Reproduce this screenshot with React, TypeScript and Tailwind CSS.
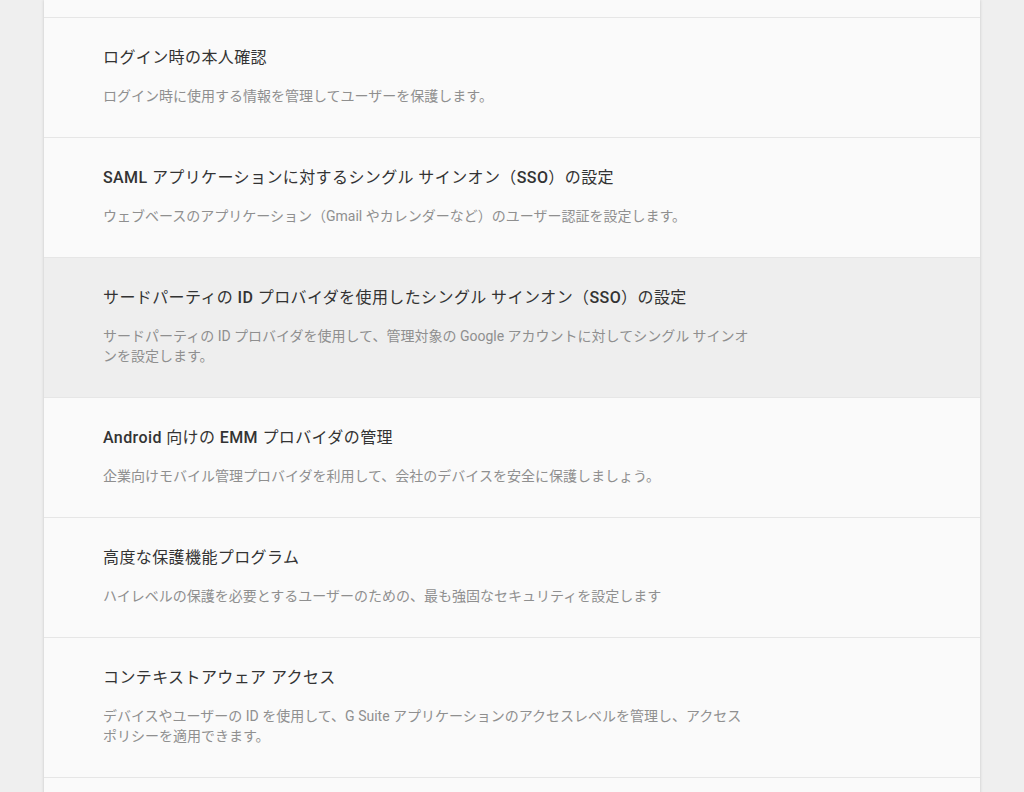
const font = { fontFamily: 'Roboto, "Noto Sans CJK JP", sans-serif' };

type Item = { title: React.ReactNode; desc: string; active?: boolean };

function L({ children }: { children: React.ReactNode }) {
  return <span className="font-medium">{children}</span>;
}

const items: Item[] = [
  {
    title: 'ログイン時の本人確認',
    desc: 'ログイン時に使用する情報を管理してユーザーを保護します。',
  },
  {
    title: (
      <>
        <L>SAML</L> アプリケーションに対するシングル サインオン（<L>SSO</L>）の設定
      </>
    ),
    desc: 'ウェブベースのアプリケーション（Gmail やカレンダーなど）のユーザー認証を設定します。',
  },
  {
    title: (
      <>
        サードパーティの <L>ID</L> プロバイダを使用したシングル サインオン（<L>SSO</L>）の設定
      </>
    ),
    desc: 'サードパーティの ID プロバイダを使用して、管理対象の Google アカウントに対してシングル サインオンを設定します。',
    active: true,
  },
  {
    title: (
      <>
        <L>Android</L> 向けの <L>EMM</L> プロバイダの管理
      </>
    ),
    desc: '企業向けモバイル管理プロバイダを利用して、会社のデバイスを安全に保護しましょう。',
  },
  {
    title: '高度な保護機能プログラム',
    desc: 'ハイレベルの保護を必要とするユーザーのための、最も強固なセキュリティを設定します',
  },
  {
    title: 'コンテキストアウェア アクセス',
    desc: 'デバイスやユーザーの ID を使用して、G Suite アプリケーションのアクセスレベルを管理し、アクセスポリシーを適用できます。',
  },
];

export default function App() {
  return (
    <div className="h-[792px] overflow-hidden bg-[#efefef] px-[44px]" style={font}>
      <div className="bg-[#fafafa] shadow-[0_0_3px_rgba(0,0,0,0.18)]">
        <div className="h-[17px]" />
        {items.map((it, i) => (
          <div
            key={i}
            className={`border-t border-[#e6e6e6] pl-[59px] pt-[28px] pb-[31px] ${
              it.active ? 'bg-[#eeeeee]' : ''
            }`}
          >
            <div className="text-[16px] leading-[24px] tracking-[0.4px] text-[#333333]">{it.title}</div>
            <p className="mt-[16px] max-w-[652px] text-[14px] leading-[20px] text-[#8f8f8f]">
              {it.desc}
            </p>
          </div>
        ))}
        <div className="h-[40px] border-t border-[#e6e6e6]" />
      </div>
    </div>
  );
}
